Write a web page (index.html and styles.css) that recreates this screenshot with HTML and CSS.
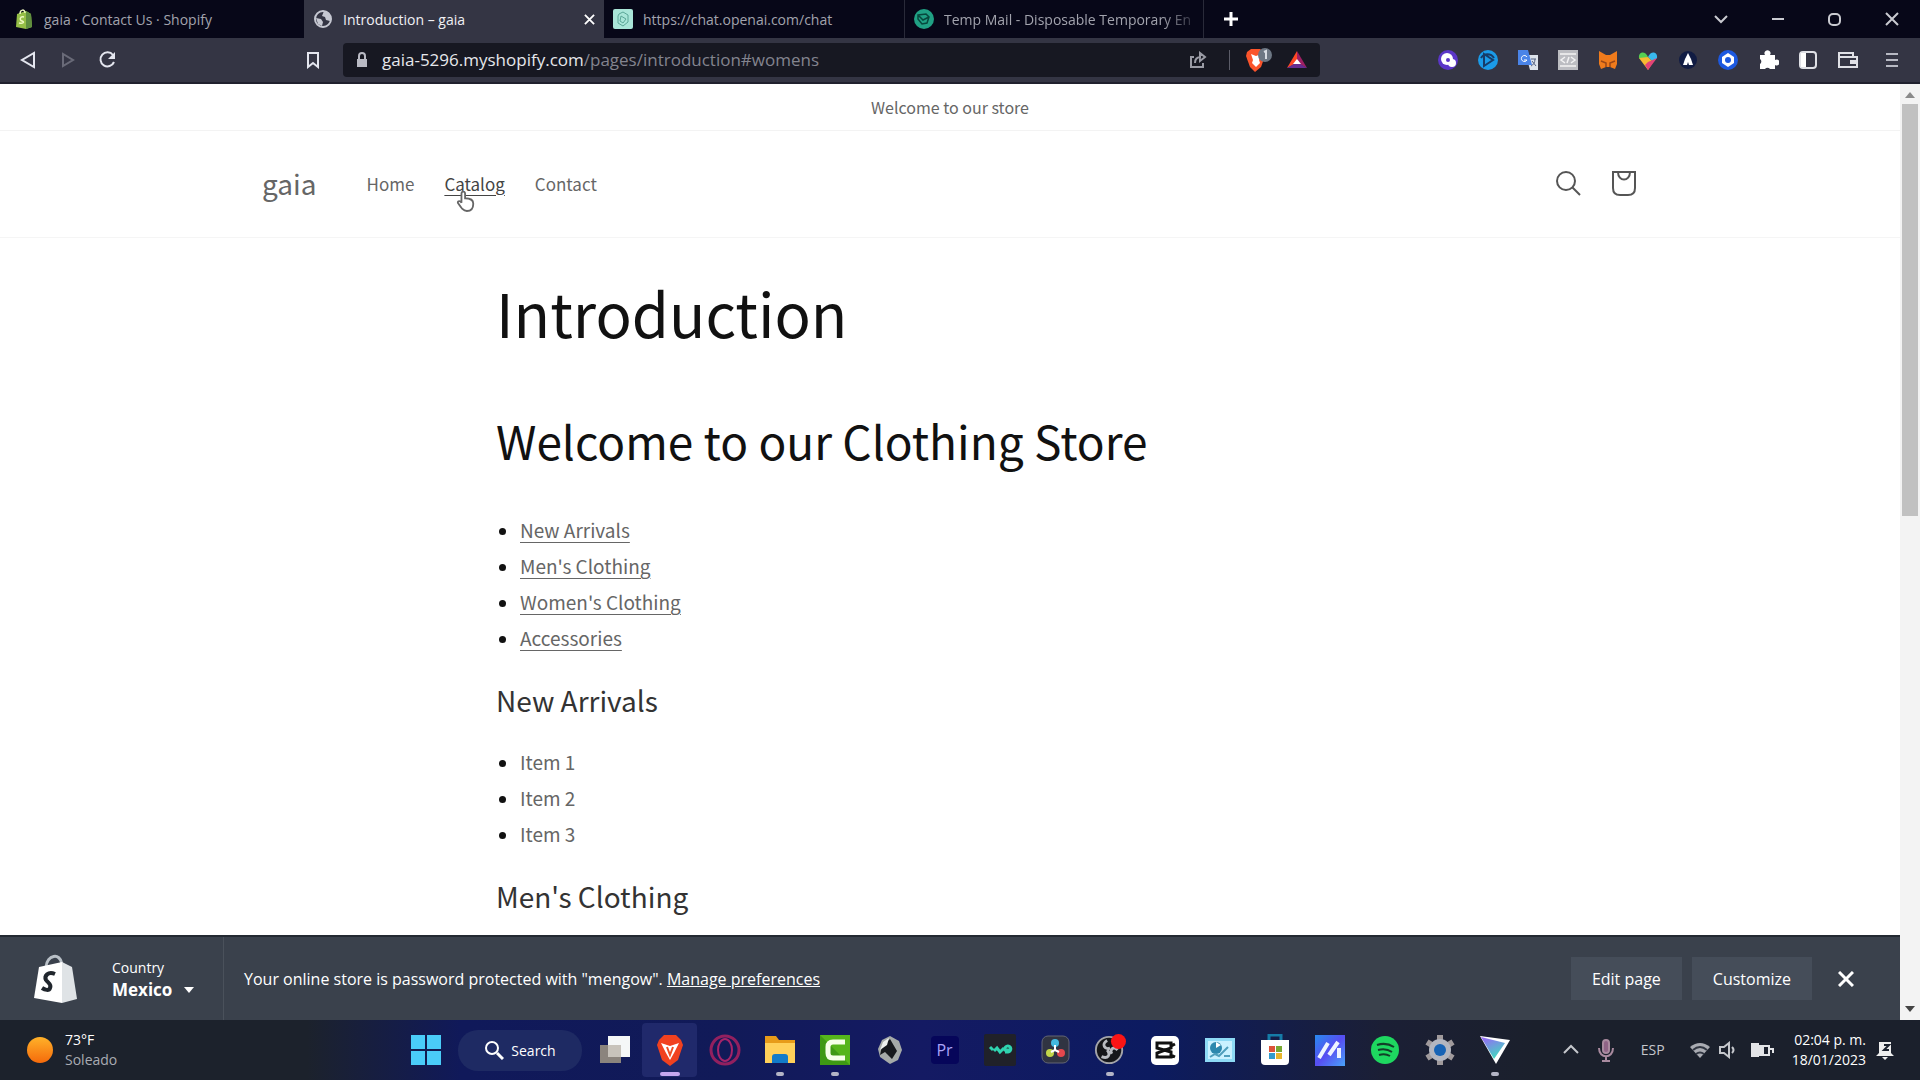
FILE: index.html
```html
<!DOCTYPE html>
<html lang="en">

<head>
    <meta charset="utf-8">
    <meta name="viewport" content="width=device-width, initial-scale=1.0">
    <title>Introduction – gaia</title>
    <link rel="stylesheet" href="styles.css">
</head>

<body>
    <div class="tabs">
        <div class="tab first">
            <svg class="favicon" viewBox="0 0 20 20"><path d="M3 5l9-3 5 3 1 13-6 2-10-2z" fill="#95bf47"/><path d="M12 2l5 3 1 13-6 2z" fill="#5e8e3e"/><path d="M6 5c0-5 5-5 5-1M10 8c-4-1-5 3-2 4s1 3-3 2" fill="none" stroke="#eef8c0" stroke-width="1.5"/></svg>
            <span>gaia · Contact Us · Shopify</span>
        </div>
        <div class="tab active">
            <svg class="favicon" viewBox="0 0 20 20"><circle cx="10" cy="10" r="8" fill="none" stroke="#c6c8d2" stroke-width="2"/><path d="M3 9l5 1 2 3-1 4-4-2zM11 2l-2 5 3 1 1 3 4 1 1-5-3-4z" fill="#c6c8d2"/></svg>
            <span>Introduction – gaia</span>
            <button class="tab_close" aria-label="Close tab"><svg viewBox="0 0 12 12"><path d="M1 1l10 10M11 1L1 11"/></svg></button>
        </div>
        <div class="tab">
            <svg class="favicon" viewBox="0 0 20 20"><rect width="20" height="20" rx="2" fill="#a9e5d8"/><path d="M6 5l4-2 5 3v7l-5 4-5-3V7zM8 7l5 3-3 4-3-2z" fill="none" stroke="#5aa697"/></svg>
            <span>https://chat.openai.com/chat</span>
        </div>
        <div class="tab last">
            <svg class="favicon" viewBox="0 0 20 20"><circle cx="10" cy="10" r="10" fill="#20a184"/><path d="M4 6l8-1 3 3-2 6-5 1-4-5zM4 6l5 5 6-3" fill="none" stroke="#07483d" stroke-width="1.5"/></svg>
            <span>Temp Mail - Disposable Temporary En</span>
        </div>
        <button class="new_tab" aria-label="New tab"><svg viewBox="0 0 14 14"><path d="M7 0v14M0 7h14"/></svg></button>
        <div class="window_buttons">
            <button aria-label="Search tabs"><svg viewBox="0 0 14 14"><path d="M1 4l6 6 6-6"/></svg></button>
            <button aria-label="Minimize"><svg viewBox="0 0 14 14"><path d="M1 7h12"/></svg></button>
            <button aria-label="Restore"><svg viewBox="0 0 14 14"><rect x="1" y="2" width="11" height="11" rx="4"/></svg></button>
            <button aria-label="Close"><svg viewBox="0 0 14 14"><path d="M1 1l12 12M13 1L1 13"/></svg></button>
        </div>
    </div>

    <div class="toolbar">
        <div class="nav_buttons">
            <button aria-label="Back"><svg viewBox="0 0 18 18"><path d="M15 2v14L3 9z"/></svg></button>
            <button class="disabled" aria-label="Forward"><svg viewBox="0 0 18 18"><path d="M4 3v12l10-6z"/></svg></button>
            <button aria-label="Reload"><svg viewBox="0 0 18 18"><path d="M15 11a7 7 0 1 1-1-7"/><path d="M16 1v7h-7z" fill="#e4e6ef" stroke="none"/></svg></button>
        </div>
        <button class="bookmark" aria-label="Bookmark"><svg viewBox="0 0 18 18"><path d="M4 2h10v14l-5-4-5 4z"/></svg></button>
        <div class="url_bar">
            <svg class="lock" viewBox="0 0 14 16"><rect x="2" y="7" width="10" height="8" fill="#b9bac4"/><path d="M4 7V4a3 3 0 0 1 6 0v3" fill="none" stroke="#b9bac4" stroke-width="2"/></svg>
            <div class="url">gaia-5296.myshopify.com<span>/pages/introduction#womens</span></div>
            <button class="share" aria-label="Share"><svg viewBox="0 0 18 18"><path d="M5 6H2v10h12v-4M6 12c0-5 3-6 6-6M11 2l5 4-5 4z"/></svg></button>
            <span class="divider"></span>
            <button aria-label="Brave shields"><svg class="shield" viewBox="0 0 28 26"><path d="M3 5l4-3h9l4 3 1 4-4 11-6 5-5-5L2 9z" fill="#fb542b"/><path d="M7 7l5 2 5-2-2 6 1 3-4 4-4-4 1-3z" fill="#fff"/><circle cx="21" cy="8" r="7" fill="#6d7784"/><path d="M20 5l2-1v8" stroke="#d8dce3" stroke-width="2" fill="none"/></svg></button>
            <button aria-label="Brave rewards"><svg class="rewards" viewBox="0 0 22 20"><path d="M11 1L1 18l10-5z" fill="#ff4724"/><path d="M11 1l10 17-10-5z" fill="#9e1f63"/><path d="M1 18h20l-10-6z" fill="#662d91"/><path d="M11 9l4 5H7z" fill="#fff"/></svg></button>
        </div>
        <div class="extensions">
            <button aria-label="Extension"><svg viewBox="0 0 22 22"><circle cx="11" cy="11" r="10" fill="#5b36c8"/><circle cx="10" cy="10" r="6" fill="#fff"/><circle cx="15" cy="14" r="4" fill="#fff"/><circle cx="11" cy="11" r="2" fill="#5b36c8"/></svg></button>
            <button aria-label="Extension"><svg viewBox="0 0 22 22"><circle cx="11" cy="11" r="10" fill="#1b9be8"/><path d="M7 5l9 6-9 6zM4 9c3-5 10-5 13 0" fill="none" stroke="#173c68" stroke-width="2"/></svg></button>
            <button aria-label="Translate"><svg viewBox="0 0 22 22"><path d="M9 6h12v15h-8z" fill="#dce2ea"/><path d="M1 1h10l4 15H1z" fill="#4a84e8"/><path d="M10 8a3 3 0 1 0 0 3H7" fill="none" stroke="#fff"/><path d="M14 10h5M18 10c0 4-2 6-4 7M15 12l4 5" fill="none" stroke="#536080"/></svg></button>
            <button aria-label="Extension"><svg viewBox="0 0 22 22"><path d="M1 1h20v20H1z" fill="#bcbdc2"/><path d="M3 5h16M3 17h16M8 8l-4 3 4 3M14 8l4 3-4 3M12 8l-2 6" fill="none" stroke="#f3f3f4" stroke-width="1.5"/></svg></button>
            <button aria-label="Wallet fox"><svg viewBox="0 0 22 22"><path d="M2 2l7 4h4l7-4v13l-2 5-5-2H9l-5 2-2-5z" fill="#ef7b1c"/><path d="M4 12l5 2v4M18 12l-5 2v4" fill="none" stroke="#9a4717" stroke-width="1.5"/></svg></button>
            <button aria-label="Extension"><svg viewBox="0 0 22 22"><path d="M11 8C8 1 1 3 2 9l4 2z" fill="#55cf52"/><path d="M11 8c3-7 10-5 9 1l-4 4z" fill="#39b9ed"/><path d="M2 9l9 12 5-8-5-5z" fill="#f6bb31"/><path d="M11 21l9-12-9 4-3 3z" fill="#e34377"/></svg></button>
            <button aria-label="Extension"><svg viewBox="0 0 22 22"><circle cx="11" cy="11" r="9" fill="#111c43"/><path d="M11 4l3 6 2 6h-4l-1-3-1 3H6l2-6z" fill="#fff"/></svg></button>
            <button aria-label="Extension"><svg viewBox="0 0 22 22"><circle cx="11" cy="11" r="10" fill="#1d59e0"/><path d="M11 4l6 4v6l-6 4-6-4V8z" fill="#fff"/><circle cx="11" cy="11" r="3" fill="#1d59e0"/></svg></button>
            <button aria-label="Extensions"><svg viewBox="0 0 22 22"><path d="M3 6h5a3 3 0 1 1 5 0h5v5a3 3 0 1 1 0 5v4h-5a3 3 0 0 0-5 0H3v-5a3 3 0 0 0 0-5z" fill="#fff"/></svg></button>
            <button aria-label="Sidebar"><svg viewBox="0 0 22 22"><rect x="3" y="3" width="16" height="16" rx="3" fill="none" stroke="#dfe0e6" stroke-width="2"/><path d="M4 4h5v14H4z" fill="#fff"/></svg></button>
            <button aria-label="Wallet"><svg viewBox="0 0 22 22"><path d="M2 4h14v4h4v10H2zM2 8h14" fill="none" stroke="#dfe0e6" stroke-width="2"/><path d="M13 11h8v4h-8z" fill="#dfe0e6"/></svg></button>
            <button class="menu" aria-label="Menu"><svg viewBox="0 0 22 22"><path d="M5 5h12M5 11h12M5 17h12" stroke="#b7b9c3" stroke-width="2"/></svg></button>
        </div>
    </div>

    <div class="viewport">
        <div class="store">
            <p class="announcement">Welcome to our store</p>
            <header class="store_header">
                <div class="header_inner">
                    <a class="logo" href="#">gaia</a>
                    <nav>
                        <a href="#">Home</a>
                        <a class="hovered" href="#">Catalog
                            <svg class="cursor" viewBox="0 0 22 24"><path d="M6 13V3c0-3 4-3 4 0v5c6 0 9 2 9 6 0 5-2 8-7 8-4 0-6-3-10-9 0-3 3-2 4 0z" fill="#fff" stroke="#666" stroke-width="2"/></svg></a>
                        <a href="#">Contact</a>
                    </nav>
                    <div class="header_icons">
                        <button aria-label="Search"><svg viewBox="0 0 28 28"><circle cx="12" cy="12" r="9"/><path d="M18 18l8 8"/></svg></button>
                        <button aria-label="Cart"><svg viewBox="0 0 28 28"><path d="M3 3h22v16q0 7-7 7h-8q-7 0-7-7z"/><path d="M8 3c0 10 12 10 12 0"/></svg></button>
                    </div>
                </div>
            </header>

            <main>
                <h1>Introduction</h1>
                <h2>Welcome to our Clothing Store</h2>
                <ul>
                    <li><a href="#new">New Arrivals</a></li>
                    <li><a href="#mens">Men's Clothing</a></li>
                    <li><a href="#womens">Women's Clothing</a></li>
                    <li><a href="#accessories">Accessories</a></li>
                </ul>
                <h3 id="new">New Arrivals</h3>
                <ul>
                    <li>Item 1</li>
                    <li>Item 2</li>
                    <li>Item 3</li>
                </ul>
                <h3 id="mens">Men's Clothing</h3>
            </main>

            <footer class="preview_bar">
                <div class="country_box">
                    <svg class="shopify" viewBox="0 0 44 50"><path d="M12 13c1-12 14-15 16-3" fill="none" stroke="#b9c0c7" stroke-width="3"/><path d="M5 13l23-5v41L0 44z" fill="#fff"/><path d="M28 8l10 5 5 32-15 4z" fill="#dfe3e6"/><path d="M21 20c-7-3-11 2-9 6 2 3 6 4 4 8-1 3-5 2-8 0" fill="none" stroke="#20262d" stroke-width="4"/></svg>
                    <button class="country">
                        <span>Country</span>
                        <b>Mexico</b>
                        <svg viewBox="0 0 10 6"><path d="M0 0h10L5 6z" fill="#fff"/></svg>
                    </button>
                </div>
                <p>Your online store is password protected with "mengow". <a href="#">Manage preferences</a></p>
                <div class="preview_buttons">
                    <button>Edit page</button>
                    <button>Customize</button>
                    <button class="close" aria-label="Close"><svg viewBox="0 0 16 16"><path d="M1 1l14 14M15 1L1 15"/></svg></button>
                </div>
            </footer>
        </div>

        <div class="scrollbar">
            <svg viewBox="0 0 10 6"><path d="M0 6l5-6 5 6z" fill="#8a8a8a"/></svg>
            <div class="track"><div class="thumb"></div></div>
            <svg viewBox="0 0 10 6"><path d="M0 0h10L5 6z" fill="#444"/></svg>
        </div>
    </div>

    <div class="taskbar">
        <div class="weather">
            <svg viewBox="0 0 28 28"><defs><linearGradient id="sun" x2="0" y2="1"><stop stop-color="#ffb229"/><stop offset="1" stop-color="#f56a0b"/></linearGradient></defs><circle cx="14" cy="14" r="13" fill="url(#sun)"/></svg>
            <p>73°F<br><span>Soleado</span></p>
        </div>

        <div class="apps">
            <button aria-label="Start"><svg viewBox="0 0 32 32"><path d="M1 1h14v14H1zM17 1h14v14H17zM1 17h14v14H1zM17 17h14v14H17z" fill="#4accf8"/></svg></button>
            <button class="search"><svg viewBox="0 0 20 20"><circle cx="8" cy="8" r="6" fill="none" stroke="#fff" stroke-width="2"/><path d="M13 13l6 6" stroke="#fff" stroke-width="3"/></svg>Search</button>
            <button aria-label="Task view"><svg viewBox="0 0 32 32"><path d="M1 11h21v18H1z" fill="#8b847d"/><path d="M9 2h22v21H9z" fill="#f5f7f7"/><path d="M9 11h13v12H9z" fill="#c8c3bb"/></svg></button>
            <button class="running current" aria-label="Brave"><svg viewBox="0 0 32 32"><path d="M5 6l5-5h12l5 5 2 5-5 15-8 6-8-6L3 11z" fill="#f1411f"/><path d="M7 9l9 3 9-3-5 10-4 7-4-7z" fill="#fff"/><path d="M13 13l3 8 3-8" fill="none" stroke="#ef4d24" stroke-width="2"/></svg></button>
            <button aria-label="Opera GX"><svg viewBox="0 0 32 32"><ellipse cx="16" cy="16" rx="14" ry="14" fill="none" stroke="#92205f" stroke-width="3"/><ellipse cx="16" cy="16" rx="7" ry="11" fill="none" stroke="#a5246a" stroke-width="2"/></svg></button>
            <button class="running" aria-label="Files"><svg viewBox="0 0 32 32"><path d="M1 2h11l3 4h16v23H1z" fill="#e79b19"/><path d="M1 9h30v20H1z" fill="#ffd05a"/><path d="M8 29v-6q0-3 3-3h10q3 0 3 3v6z" fill="#127bc9"/></svg></button>
            <button class="running" aria-label="Camtasia"><svg viewBox="0 0 32 32"><path d="M1 1h30v30H1z" fill="#55b51b"/><path d="M1 1l30 30H1z" fill="#277e0d" opacity=".5"/><path d="M26 8H14q-5 0-5 5v6q0 5 5 5h12" fill="none" stroke="#f5ffe8" stroke-width="5"/></svg></button>
            <button aria-label="Inkscape"><svg viewBox="0 0 32 32"><path d="M16 2l9 5 3 9-4 10-8 4-10-7-2-8 4-9z" fill="#a5aaa8"/><path d="M16 5l7 12-5 8-7-7-5 3 2-9z" fill="#16191d"/><path d="M9 8l6-4-2 7-7 5z" fill="#eef1ef"/></svg></button>
            <button aria-label="Premiere Pro"><span class="premiere">Pr</span></button>
            <button aria-label="Audio app"><svg viewBox="0 0 32 32"><rect width="32" height="32" rx="2" fill="#202129"/><path d="M6 13l3 3M10 17l3-3 3 4 4-4M21 18h3a3 3 0 1 0-3-2h6" fill="none" stroke="#30d3b0" stroke-width="3"/></svg></button>
            <button aria-label="DaVinci Resolve"><svg viewBox="0 0 32 32"><rect x="3" y="2" width="27" height="27" rx="6" fill="#303442" stroke="#626575"/><circle cx="16" cy="9" r="4" fill="#43b9df"/><circle cx="11" cy="19" r="4" fill="#c2d64a"/><circle cx="22" cy="19" r="4" fill="#e4474d"/><path d="M16 16l-4 2M16 16l4 2M16 16v-5" stroke="#fff" stroke-width="2"/></svg></button>
            <button class="running" aria-label="OBS"><svg viewBox="0 0 34 34"><circle cx="16" cy="17" r="14" fill="#151619" stroke="#a4a5aa" stroke-width="2"/><path d="M14 7c-7 4-2 10 3 8M25 17c-4-5-9 0-6 4M8 24c7 3 10-2 6-7" fill="none" stroke="#b9bbc0" stroke-width="3"/><circle cx="26" cy="8" r="8" fill="#fb1515"/></svg></button>
            <button aria-label="CapCut"><svg viewBox="0 0 32 32"><rect x="2" y="2" width="28" height="29" rx="5" fill="#fff"/><path d="M26 10l-4 2V9H8v5l14 4v5H8v-4l14-5v-2M22 21l4 2" fill="none" stroke="#111" stroke-width="3"/></svg></button>
            <button aria-label="Control panel"><svg viewBox="0 0 32 32"><path d="M1 4h30v24H1z" fill="#8edaf5"/><path d="M4 7h24v18H4z" fill="#c9f1ff"/><circle cx="12" cy="14" r="6" fill="#2c88ae"/><path d="M12 14V8l5 3z" fill="#fff"/><path d="M6 23l5-3 4 2 9-9M20 22h6" fill="none" stroke="#4e9ebc" stroke-width="2"/></svg></button>
            <button aria-label="Microsoft Store"><svg viewBox="0 0 32 32"><path d="M10 6V1h12v5" fill="none" stroke="#157ba7" stroke-width="3"/><path d="M2 6h28v21q0 4-4 4H6q-4 0-4-4z" fill="#fff"/><path d="M10 12h6v6h-6z" fill="#dd5339"/><path d="M17 12h6v6h-6z" fill="#78a832"/><path d="M10 19h6v6h-6z" fill="#329bcd"/><path d="M17 19h6v6h-6z" fill="#e8b52b"/></svg></button>
            <button aria-label="Editor"><svg viewBox="0 0 32 32"><defs><linearGradient id="mm" x2="1" y2="1"><stop stop-color="#288bef"/><stop offset=".5" stop-color="#574df2"/><stop offset="1" stop-color="#49a4fa"/></linearGradient></defs><path d="M1 1h30v31H1z" fill="url(#mm)"/><path d="M5 24L14 9M15 21L24 8M25 14v10" fill="none" stroke="#eef4ff" stroke-width="4"/></svg></button>
            <button aria-label="Spotify"><svg viewBox="0 0 32 32"><circle cx="16" cy="16" r="14" fill="#1ed760"/><path d="M8 11q9-3 17 2M9 16q8-2 14 2M10 21q6-2 11 1" fill="none" stroke="#123f28" stroke-width="2"/></svg></button>
            <button aria-label="Settings"><svg viewBox="0 0 32 32"><path d="M16 1v30M3 8l26 16M3 24l26-16" stroke="#a09a9c" stroke-width="6"/><circle cx="16" cy="16" r="11" fill="#b3b6c0"/><circle cx="16" cy="16" r="6" fill="#1763b5"/></svg></button>
            <button class="running" aria-label="Proton VPN"><svg viewBox="0 0 32 32"><defs><linearGradient id="vpn" x2=".5" y2="1"><stop stop-color="#9c62fa"/><stop offset="1" stop-color="#43d6c0"/></linearGradient></defs><path d="M1 2l30 4-14 24z" fill="#fff"/><path d="M2 3l24 6-11 16z" fill="url(#vpn)"/></svg></button>
        </div>

        <div class="tray">
            <svg class="caret" viewBox="0 0 18 18"><path d="M2 12l7-7 7 7"/></svg>
            <svg class="mic" viewBox="0 0 18 24"><rect x="6" y="2" width="6" height="13" rx="3" fill="#8f6386"/><path d="M2 10c0 11 14 11 14 0M9 18v5M5 23h8"/></svg>
            <span class="lang">ESP</span>
            <svg class="wifi" viewBox="0 0 22 18"><path d="M1 6q10-8 20 0L11 17z" fill="#a9abb2" stroke="none"/><path d="M4 9q7-6 14 0M7 13q4-3 8 0" stroke="#303541"/></svg>
            <svg class="sound" viewBox="0 0 20 18"><path d="M2 6h4l5-4v14l-5-4H2zM14 6q3 3 0 6"/></svg>
            <svg class="battery" viewBox="0 0 24 18"><path d="M5 5h14v9H5zM20 8h3v4" stroke="#e3e4e7"/><path d="M1 2h8v14H1zM9 6h5v8H9z" fill="#e3e4e7" stroke="none"/></svg>
            <p>02:04 p. m.<br>18/01/2023</p>
            <svg class="bell" viewBox="0 0 18 22"><path d="M3 3h12v11l3 3H0l3-3zM6 18h6l-3 3z" fill="#eee" stroke="none"/><path d="M8 6h5l-5 5h5" stroke="#1c222e"/></svg>
        </div>
    </div>
</body>

</html>
```
FILE: styles.css
```css
* {
    box-sizing: border-box;
    margin: 0;
}

body {
    display: flex;
    flex-direction: column;
    height: 100vh;
    overflow: hidden;
    font-family: "Open Sans", sans-serif;
    background-color: #fff;
}

button {
    display: flex;
    align-items: center;
    justify-content: center;
    flex-shrink: 0;
    padding: 0;
    border: none;
    background: none;
    color: inherit;
    font-family: inherit;
}

svg {
    display: block;
    flex-shrink: 0;
}

/* browser tabs */
.tabs {
    display: flex;
    height: 38px;
    background-color: #070718;
    color: #a2a3ad;
    font-size: 14px;
}

.tab {
    display: flex;
    align-items: center;
    gap: 10px;
    width: 300px;
    padding: 0 9px;
    white-space: nowrap;
}

.tab.first {
    width: 304px;
    padding-left: 14px;
}

.tab.active {
    background-color: #343544;
    color: #f0f0f4;
}

.tab.last {
    padding-right: 0;
    border-left: 1px solid #292a39;
    border-right: 1px solid #292a39;
}

.tab.last span {
    -webkit-mask-image: linear-gradient(to right, #000 88%, rgba(0, 0, 0, 0.3));
    mask-image: linear-gradient(to right, #000 88%, rgba(0, 0, 0, 0.3));
}

.favicon {
    width: 20px;
    height: 20px;
}

.tab_close {
    margin-left: auto;
}

.tab_close svg {
    width: 11px;
    stroke: #fff;
    stroke-width: 2;
}

.new_tab {
    width: 54px;
}

.new_tab svg {
    width: 14px;
    stroke: #fff;
    stroke-width: 3;
}

.window_buttons {
    display: flex;
    margin-left: auto;
}

.window_buttons button {
    width: 57px;
}

.window_buttons svg {
    width: 14px;
    fill: none;
    stroke: #c9cad0;
    stroke-width: 2;
}

/* address row */
.toolbar {
    display: flex;
    align-items: center;
    height: 46px;
    background-color: #343544;
    border-bottom: 2px solid #20212e;
}

.nav_buttons {
    display: flex;
    width: 293px;
    padding-left: 8px;
}

.nav_buttons button,
.bookmark {
    width: 40px;
}

.toolbar svg {
    width: 22px;
}

.nav_buttons svg,
.bookmark svg {
    width: 18px;
    fill: none;
    stroke: #e4e6ef;
    stroke-width: 2;
}

.disabled {
    opacity: 0.3;
}

.url_bar {
    display: flex;
    align-items: center;
    flex: 1;
    height: 34px;
    margin-left: 10px;
    padding: 0 12px;
    border-radius: 4px;
    background-color: #171822;
}

.toolbar .lock {
    width: 14px;
    margin-right: 13px;
}

.url {
    flex: 1;
    color: #e6e7eb;
    font-size: 17px;
    line-height: 24px;
}

.url span {
    color: #83848f;
}

.share svg {
    fill: none;
    stroke: #9a9ba5;
    stroke-width: 2;
    width: 18px;
}

.divider {
    width: 1px;
    height: 20px;
    margin: 0 14px 0 22px;
    background-color: #5b5c68;
}

.toolbar .shield {
    width: 28px;
}

.rewards {
    margin-left: 14px;
}

.extensions {
    display: flex;
    margin-left: 108px;
    padding-right: 8px;
}

.extensions button {
    width: 40px;
}

.extensions .menu {
    margin-left: 4px;
}

/* page area */
.viewport {
    display: flex;
    flex: 1;
    min-height: 0;
}

.store {
    display: flex;
    flex-direction: column;
    flex: 1;
    color: #666;
    font-family: "Noto Sans CJK SC", sans-serif;
}

.store a {
    color: inherit;
}

.announcement {
    height: 47px;
    border-bottom: 1px solid #f3f3f3;
    font-size: 16px;
    line-height: 46px;
    text-align: center;
}

.store_header {
    height: 107px;
    border-bottom: 1px solid #f5f5f5;
}

.header_inner {
    display: flex;
    align-items: center;
    max-width: 1376px;
    height: 104px;
    margin: 0 auto;
}

.logo {
    font-size: 28px;
    text-decoration: none;
}

nav {
    display: flex;
    gap: 30px;
    margin-left: 50px;
    font-size: 17px;
}

nav a {
    position: relative;
    text-decoration: none;
}

.store .hovered {
    color: #444;
    text-decoration: underline;
    text-underline-offset: 4px;
}

.cursor {
    position: absolute;
    left: 12px;
    top: 20px;
    width: 20px;
}

.header_icons {
    display: flex;
    gap: 28px;
    margin-left: auto;
}

.header_icons svg {
    width: 28px;
    fill: none;
    stroke: #555;
    stroke-width: 2;
}

main {
    flex: 1;
    width: 908px;
    max-width: 100%;
    min-height: 0;
    margin: 0 auto;
    padding-top: 34px;
    overflow: hidden;
}

h1,
h2,
h3 {
    color: #111;
    font-weight: 400;
}

h1 {
    font-size: 60px;
    line-height: 80px;
}

h2 {
    margin-top: 58px;
    font-size: 46px;
    line-height: 60px;
}

h3 {
    margin: 24px 0;
    color: #333;
    font-size: 28px;
    line-height: 40px;
}

ul {
    padding-left: 24px;
    font-size: 19px;
    line-height: 36px;
}

h2 + ul {
    margin-top: 42px;
}

li::marker {
    color: #111;
}

li a {
    text-underline-offset: 4px;
}

/* shopify admin strip */
.preview_bar {
    display: flex;
    align-items: center;
    height: 85px;
    background-color: #3a414c;
    border-top: 2px solid #232932;
    color: #fff;
    font-family: "Open Sans", sans-serif;
    font-size: 16px;
}

.country_box {
    display: flex;
    align-items: center;
    gap: 34px;
    width: 224px;
    height: 100%;
    padding-left: 34px;
    border-right: 1px solid #4a515b;
}

.shopify {
    width: 44px;
}

.country {
    display: grid;
    grid-template-columns: auto auto;
    column-gap: 12px;
    align-items: center;
    text-align: left;
    font-size: 17px;
    line-height: 22px;
}

.country span {
    grid-column: 1 / 3;
    font-size: 14px;
}

.country svg {
    width: 10px;
}

.preview_bar p {
    padding-left: 20px;
}

.preview_buttons {
    display: flex;
    gap: 10px;
    margin-left: auto;
    padding-right: 34px;
}

.preview_buttons button {
    height: 43px;
    padding: 0 21px;
    background-color: #454d59;
    font-size: 16px;
}

.preview_buttons .close {
    background: none;
    padding: 0 12px;
    margin-left: 4px;
}

.close svg {
    width: 16px;
    stroke: #fff;
    stroke-width: 3;
}

.scrollbar {
    display: flex;
    flex-direction: column;
    align-items: center;
    width: 20px;
    padding: 8px 0;
    background-color: #f3f3f3;
}

.scrollbar svg {
    width: 10px;
}

.track {
    flex: 1;
    width: 16px;
    padding: 6px 0;
}

.thumb {
    height: 46%;
    background-color: #c1c1c1;
}

/* windows taskbar */
.taskbar {
    display: grid;
    grid-template-columns: 1fr auto 1fr;
    height: 60px;
    background: linear-gradient(to right, #1c222c 16%, #10195a 24%, #111a58 38%, #141a63 48%, #0c1b60 60%, #1b1f35 72%, #1b202c 80%);
    color: #fff;
    font-size: 14px;
    line-height: 20px;
}

.weather {
    display: flex;
    align-items: center;
    gap: 11px;
    padding-left: 26px;
}

.weather svg {
    width: 28px;
}

.weather span {
    color: #a9acb3;
}

.apps {
    display: flex;
    align-items: center;
}

.apps button {
    position: relative;
    width: 55px;
    height: 54px;
}

.apps svg {
    width: 32px;
}

.apps .search {
    gap: 7px;
    width: 124px;
    height: 41px;
    margin: 0 5px;
    border-radius: 20px;
    background-color: #1e2a63;
    font-size: 14px;
}

.search svg {
    width: 20px;
}

.apps .current {
    border-radius: 4px;
    background-color: #20296b;
}

.running::after {
    content: "";
    position: absolute;
    bottom: 1px;
    width: 8px;
    height: 4px;
    border-radius: 2px;
    background-color: #b4b5c6;
}

.current::after {
    width: 20px;
    background-color: #c6a7f0;
}

.premiere {
    width: 28px;
    height: 28px;
    border-radius: 4px;
    background-color: #06065a;
    color: #a9a4f8;
    font-size: 16px;
    line-height: 28px;
}

.tray {
    display: flex;
    align-items: center;
    justify-content: flex-end;
    padding-right: 26px;
}

.tray svg {
    width: 18px;
    fill: none;
    stroke: #c5c7cc;
    stroke-width: 2;
}

.tray .mic {
    margin: 0 26px 0 17px;
    stroke: #a98a9f;
}

.tray .lang {
    margin-right: 24px;
    color: #c5c7cc;
    font-size: 14px;
}

.tray .wifi {
    width: 22px;
    margin-right: 7px;
}

.tray .sound {
    width: 20px;
    margin-right: 12px;
}

.tray .battery {
    width: 24px;
    margin-right: 18px;
}

.tray p {
    text-align: right;
}

.tray .bell {
    margin-left: 10px;
}
```
